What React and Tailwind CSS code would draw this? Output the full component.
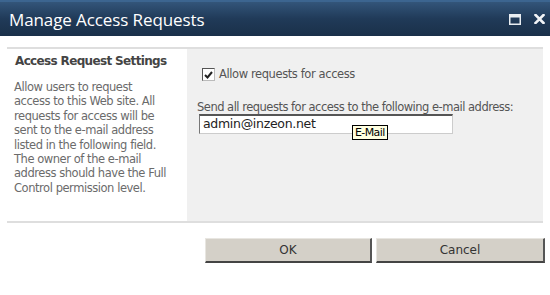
const ui = { fontFamily: '"DejaVu Sans", Verdana, sans-serif' };

const MaximizeIcon = () => (
  <svg width="12" height="11" viewBox="0 0 12 11">
    <rect x="0.75" y="0.75" width="10.5" height="9.5" fill="none" stroke="#e8edf2" strokeWidth="1.5" />
    <rect x="1" y="1" width="10" height="2.5" fill="#e8edf2" />
  </svg>
);

const CloseIcon = () => (
  <svg width="11" height="10" viewBox="0 0 11 10">
    <path d="M1.5 1 L9.5 9 M9.5 1 L1.5 9" stroke="#f2f4f7" strokeWidth="2.6" strokeLinecap="square" />
  </svg>
);

const description = [
  'Allow users to request',
  'access to this Web site. All',
  'requests for access will be',
  'sent to the e-mail address',
  'listed in the following field.',
  'The owner of the e-mail',
  'address should have the Full',
  'Control permission level.',
];

export default function App() {
  return (
    <div className="w-[550px] h-[295px] bg-white overflow-hidden" style={ui}>
      {/* Title bar */}
      <div className="h-[36px] flex items-center justify-between pl-[9px] pr-[5px] bg-gradient-to-b from-[#33557a] via-[#203a58] to-[#1a3049] border-t-2 border-[#3c6590]">
        <span
          className="text-white text-[17px] leading-none tracking-[-0.1px]"
          style={{ fontFamily: '"Open Sans", "Noto Sans", sans-serif' }}
        >
          Manage Access Requests
        </span>
        <div className="flex items-center gap-[13px]">
          <MaximizeIcon />
          <CloseIcon />
        </div>
      </div>

      {/* Settings section */}
      <div className="mx-[7px] mt-[11px] border-t-2 border-b-2 border-[#dedede] flex h-[176px]">
        <div className="w-[180px] pl-[7px] pt-[5px]">
          <div className="pl-[1px] text-[12px] font-bold text-[#444] leading-[15px] tracking-[-0.65px]">
            Access Request Settings
          </div>
          <p className="mt-[11px] text-[11.5px] text-[#6b6b6b] leading-[14.4px] tracking-[-0.45px] whitespace-nowrap">
            {description.map((line, i) => (
              <span key={i} className="block">{line}</span>
            ))}
          </p>
        </div>
        <div className="flex-1 bg-[#f0f0f0] pl-[10px] pt-[17px]">
          <label className="flex items-center gap-[4px] pl-[5px]">
            <span className="w-[13px] h-[13px] bg-white border border-[#555] border-r-[#bbb] border-b-[#bbb] flex items-center justify-center">
              <svg width="9" height="8" viewBox="0 0 9 8">
                <path d="M1 4 L3.5 6.5 L8 1" fill="none" stroke="#222" strokeWidth="2" />
              </svg>
            </span>
            <span className="text-[11.5px] text-[#555] tracking-[-0.4px]">Allow requests for access</span>
          </label>
          <div className="mt-[17px] text-[11.5px] text-[#555] tracking-[-0.5px] leading-[14px]">
            Send all requests for access to the following e-mail address:
          </div>
          <div className="relative mt-[0px] ml-[2px] w-[254px] h-[20px] bg-white border border-[#ccc] border-t-2 border-t-[#555] border-l-[#777] flex items-center pl-[3px]">
            <span className="text-[12.5px] text-[#222] tracking-[-0.3px]">admin@inzeon.net</span>
            <span className="absolute left-[152px] top-[9px] bg-[#ffffe1] border border-black px-[2px] text-[11px] leading-[13px] text-black tracking-[-0.6px]">
              E-Mail
            </span>
          </div>
        </div>
      </div>

      {/* Buttons */}
      <div className="flex justify-end gap-[4px] pr-[5px] mt-[15px]">
        <button className="w-[167px] h-[25px] bg-[#d4d0c8] border-t border-l border-[#e8e6e1] border-r-2 border-b-2 border-r-[#555] border-b-[#444] text-[12px] text-[#333]">
          OK
        </button>
        <button className="w-[169px] h-[25px] bg-[#d4d0c8] border-t border-l border-[#e8e6e1] border-r-2 border-b-2 border-r-[#555] border-b-[#444] text-[12px] text-[#333]">
          Cancel
        </button>
      </div>
    </div>
  );
}
